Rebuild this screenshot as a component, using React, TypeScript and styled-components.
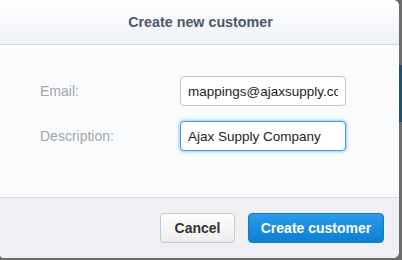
import React from "react";
import styled, { createGlobalStyle } from "styled-components";

const GlobalStyle = createGlobalStyle`
  html, body {
    margin: 0;
    padding: 0;
  }
  body {
    width: 402px;
    height: 260px;
    overflow: hidden;
    font-family: "Liberation Sans", Arial, sans-serif;
    background: linear-gradient(
      to bottom,
      #6b6b6b 0,
      #6b6b6b 65px,
      #24506a 65px,
      #24506a 122px,
      #6b6b6b 122px
    );
  }
`;

function App() {
  return (
    <>
      <GlobalStyle />
      <Modal>
        <Header>
          <Title>Create new customer</Title>
        </Header>
        <Body>
          <Row>
            <Label htmlFor="email">Email:</Label>
            <Input id="email" defaultValue="mappings@ajaxsupply.com" />
          </Row>
          <Row>
            <Label htmlFor="description">Description:</Label>
            <Input id="description" defaultValue="Ajax Supply Company" $focused />
          </Row>
        </Body>
        <Footer>
          <Button>Cancel</Button>
          <Button $primary>Create customer</Button>
        </Footer>
      </Modal>
    </>
  );
}

export default App;

const Modal = styled.div`
  width: 399px;
  height: 258px;
  display: flex;
  flex-direction: column;
  background: #fafbfd;
  border-radius: 0 6px 6px 4px;
  overflow: hidden;
`;

const Header = styled.div`
  height: 44px;
  flex-shrink: 0;
  display: flex;
  align-items: center;
  justify-content: center;
  background: linear-gradient(to bottom, #ffffff, #eef1f5);
  border-bottom: 1px solid #d3d8de;
`;

const Title = styled.h1`
  margin: 0;
  font-size: 14.3px;
  font-weight: bold;
  color: #4b596b;
  padding-left: 2px;
`;

const Body = styled.div`
  flex: 1;
  display: flex;
  flex-direction: column;
  gap: 15px;
  padding: 31px 0 0 40px;
  background: #fafbfd;
`;

const Row = styled.div`
  display: flex;
  align-items: center;
  height: 30px;
`;

const Label = styled.label`
  width: 140px;
  font-size: 14px;
  color: #a2a6ab;
`;

const Input = styled.input<{ $focused?: boolean }>`
  box-sizing: border-box;
  width: 166px;
  height: 30px;
  padding: 0 7px;
  font-family: "Liberation Sans", Arial, sans-serif;
  font-size: 13.5px;
  color: #1e1e1e;
  background: #fff;
  border-radius: 4px;
  outline: none;
  border: 1px solid ${(p) => (p.$focused ? "#3a9ee8" : "#c4c4c4")};
  box-shadow: ${(p) => (p.$focused ? "0 0 3px 1px rgba(70,160,235,0.55)" : "none")};
`;

const Footer = styled.div`
  height: 61px;
  flex-shrink: 0;
  box-sizing: border-box;
  display: flex;
  justify-content: flex-end;
  align-items: flex-start;
  gap: 13px;
  padding: 15px 15px 0 0;
  background: #eef0f3;
  border-top: 1px solid #d6dadf;
`;

const Button = styled.button<{ $primary?: boolean }>`
  height: 30px;
  padding: 0;
  white-space: nowrap;
  font-family: "Liberation Sans", Arial, sans-serif;
  font-size: 14px;
  font-weight: bold;
  border-radius: 4px;
  cursor: pointer;
  color: ${(p) => (p.$primary ? "#ffffff" : "#333333")};
  border: 1px solid ${(p) => (p.$primary ? "#1579c4" : "#c8c8c8")};
  background: ${(p) =>
    p.$primary
      ? "linear-gradient(to bottom, #2c9be8, #0b7fd4)"
      : "linear-gradient(to bottom, #fdfdfd, #eeeeee)"};
  width: ${(p) => (p.$primary ? "136px" : "75px")};
`;
